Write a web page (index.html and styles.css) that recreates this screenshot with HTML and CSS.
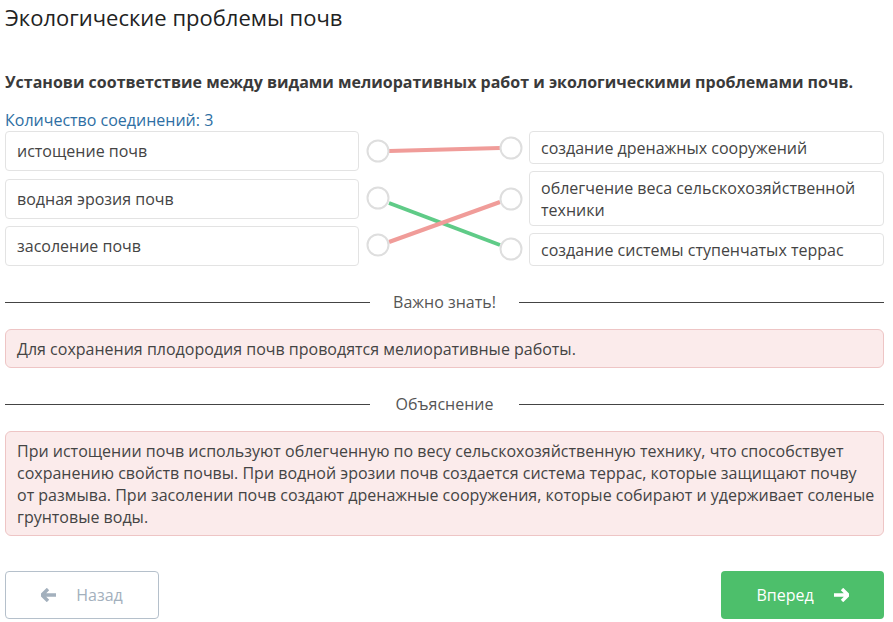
FILE: index.html
```html
<!DOCTYPE html>
<html lang="ru">
<head>
  <meta charset="UTF-8" />
  <title>Экологические проблемы почв</title>
  <link rel="stylesheet" href="styles.css">
</head>
<body>
  <h1>Экологические проблемы почв</h1>
  <p class="question">Установи соответствие между видами мелиоративных работ и экологическими проблемами почв.</p>
  <p class="counter">Количество соединений: 3</p>

  <div class="match">
    <div class="col left">
      <div class="item">истощение почв</div>
      <div class="item">водная эрозия почв</div>
      <div class="item">засоление почв</div>
    </div>
    <svg class="links" width="170" height="135" viewBox="0 0 170 135">
      <line x1="30" y1="20" x2="141" y2="17" stroke="#f09c99" stroke-width="4"/>
      <line x1="30" y1="72" x2="141" y2="114" stroke="#5fcb87" stroke-width="4"/>
      <line x1="30" y1="111" x2="141" y2="71" stroke="#f09c99" stroke-width="4"/>
      <g fill="#fff" stroke="#dedede" stroke-width="2">
        <circle cx="19" cy="20" r="10.5"/>
        <circle cx="19" cy="67" r="10.5"/>
        <circle cx="19" cy="114" r="10.5"/>
        <circle cx="152" cy="17" r="10.5"/>
        <circle cx="152" cy="68" r="10.5"/>
        <circle cx="152" cy="118" r="10.5"/>
      </g>
    </svg>
    <div class="col right">
      <div class="item">создание дренажных сооружений</div>
      <div class="item">облегчение веса сельскохозяйственной техники</div>
      <div class="item">создание системы ступенчатых террас</div>
    </div>
  </div>

  <div class="divider"><span>Важно знать!</span></div>
  <div class="note">Для сохранения плодородия почв проводятся мелиоративные работы.</div>

  <div class="divider"><span>Объяснение</span></div>
  <div class="note">При истощении почв используют облегченную по весу сельскохозяйственную технику, что способствует сохранению свойств почвы. При водной эрозии почв создается система террас, которые защищают почву от размыва. При засолении почв создают дренажные сооружения, которые собирают и удерживает соленые грунтовые воды.</div>

  <div class="nav">
    <button class="btn back">
      <svg width="16" height="14" viewBox="0 0 16 14"><path d="M7 1 L1 7 L7 13 M1 7 H15" fill="none" stroke="currentColor" stroke-width="3.4" stroke-linejoin="round"/></svg>
      Назад
    </button>
    <button class="btn next">
      Вперед
      <svg width="16" height="14" viewBox="0 0 16 14"><path d="M9 1 L15 7 L9 13 M15 7 H1" fill="none" stroke="currentColor" stroke-width="3.4" stroke-linejoin="round"/></svg>
    </button>
  </div>
</body>
</html>
```

FILE: styles.css
```css
body {
  margin: 0;
  padding: 0 9px 0 5px;
  font-family: 'Open Sans', sans-serif;
  color: #333;
  background: #fff;
}

h1 {
  font-size: 22px;
  font-weight: 400;
  margin: 2px 0 0;
  line-height: 30px;
  color: #222;
}

.question {
  font-size: 16px;
  font-weight: 700;
  margin: 38px 0 0;
  line-height: 24px;
  color: #3a3a3a;
}

.counter {
  font-size: 16px;
  color: #2d6ea3;
  margin: 15px 0 0;
  line-height: 22px;
}

.match {
  display: grid;
  grid-template-columns: 354px 170px 355px;
}

.col {
  display: flex;
  flex-direction: column;
  gap: 7px;
}

.left {
  gap: 7.5px;
}

.item {
  border: 1px solid #e3e3e3;
  border-radius: 4px;
  padding: 8px 11px;
  font-size: 16px;
  line-height: 22px;
  color: #444;
}

.left .item {
  height: 40px;
  box-sizing: border-box;
}

.right .item {
  padding: 5px 11px 4px;
}

.links {
  display: block;
}

.divider {
  display: flex;
  align-items: center;
  margin: 24px 0 0;
  font-size: 16px;
  color: #555;
  line-height: 24px;
}

.divider span {
  width: 149px;
  text-align: center;
}

.divider::before,
.divider::after {
  content: "";
  flex: 1;
  border-top: 1px solid #444;
}

.note {
  margin-top: 15px;
  background: #fbebeb;
  border: 1px solid #eec5c5;
  border-radius: 6px;
  padding: 8px 8px 7px 11px;
  font-size: 16px;
  line-height: 22px;
  color: #444;
}

.nav {
  display: flex;
  justify-content: space-between;
  margin-top: 35px;
}

.btn {
  height: 48px;
  border-radius: 4px;
  font-family: 'Open Sans', sans-serif;
  font-size: 16px;
  display: flex;
  align-items: center;
  justify-content: center;
  gap: 19px;
  cursor: pointer;
}

.back {
  width: 154px;
  background: #fff;
  border: 1px solid #b5c0cb;
  color: #a3b0bd;
}

.next {
  width: 163px;
  background: #4dbf6b;
  border: none;
  color: #fff;
}
```
